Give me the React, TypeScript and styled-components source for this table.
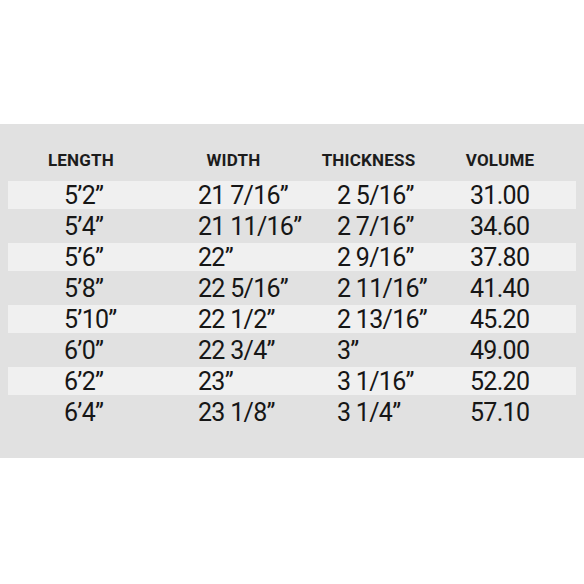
import * as React from 'react';
import styled, { createGlobalStyle } from 'styled-components';

const GlobalStyle = createGlobalStyle`
  html, body {
    margin: 0;
    padding: 0;
    background: #ffffff;
  }
  body {
    font-family: Roboto, "Liberation Sans", sans-serif;
  }
`;

const Page = styled.div`
  width: 584px;
  height: 584px;
  padding-top: 124px;
  box-sizing: border-box;
  background: #ffffff;
`;

const Panel = styled.div`
  background: #e1e1e1;
  height: 334px;
  box-sizing: border-box;
  padding: 22px 8px 0;
  display: flex;
  flex-direction: column;
`;

const HeaderRow = styled.div`
  display: grid;
  grid-template-columns: 146px 159px 111px 152px;
  height: 28px;
  align-items: center;
  margin-bottom: 7px;
`;

const HeaderCell = styled.div`
  text-align: center;
  font-size: 17px;
  font-weight: 700;
  color: #1c1c1c;
  letter-spacing: 0.2px;
`;

const Rows = styled.div`
  display: flex;
  flex-direction: column;
  gap: 3px;
`;

const Row = styled.div<{ $striped: boolean }>`
  display: grid;
  grid-template-columns: 134px 139px 133px 1fr;
  padding-left: 56px;
  height: 28px;
  align-items: center;
  background: ${({ $striped }) => ($striped ? '#f0f0f0' : 'transparent')};
`;

const Cell = styled.div`
  font-size: 25px;
  font-weight: 400;
  color: #161616;
  letter-spacing: -0.7px;
  white-space: nowrap;
`;

const headers = ['LENGTH', 'WIDTH', 'THICKNESS', 'VOLUME'];

const data: string[][] = [
  ['5\u20192\u201D', '21 7/16\u201D', '2 5/16\u201D', '31.00'],
  ['5\u20194\u201D', '21 11/16\u201D', '2 7/16\u201D', '34.60'],
  ['5\u20196\u201D', '22\u201D', '2 9/16\u201D', '37.80'],
  ['5\u20198\u201D', '22 5/16\u201D', '2 11/16\u201D', '41.40'],
  ['5\u201910\u201D', '22 1/2\u201D', '2 13/16\u201D', '45.20'],
  ['6\u20190\u201D', '22 3/4\u201D', '3\u201D', '49.00'],
  ['6\u20192\u201D', '23\u201D', '3 1/16\u201D', '52.20'],
  ['6\u20194\u201D', '23 1/8\u201D', '3 1/4\u201D', '57.10'],
];

const App: React.FC = () => (
  <>
    <GlobalStyle />
    <Page>
      <Panel>
        <HeaderRow>
          {headers.map((h) => (
            <HeaderCell key={h}>{h}</HeaderCell>
          ))}
        </HeaderRow>
        <Rows>
          {data.map((row, i) => (
            <Row key={row[0]} $striped={i % 2 === 0}>
              {row.map((value, j) => (
                <Cell key={j}>{value}</Cell>
              ))}
            </Row>
          ))}
        </Rows>
      </Panel>
    </Page>
  </>
);

export default App;
